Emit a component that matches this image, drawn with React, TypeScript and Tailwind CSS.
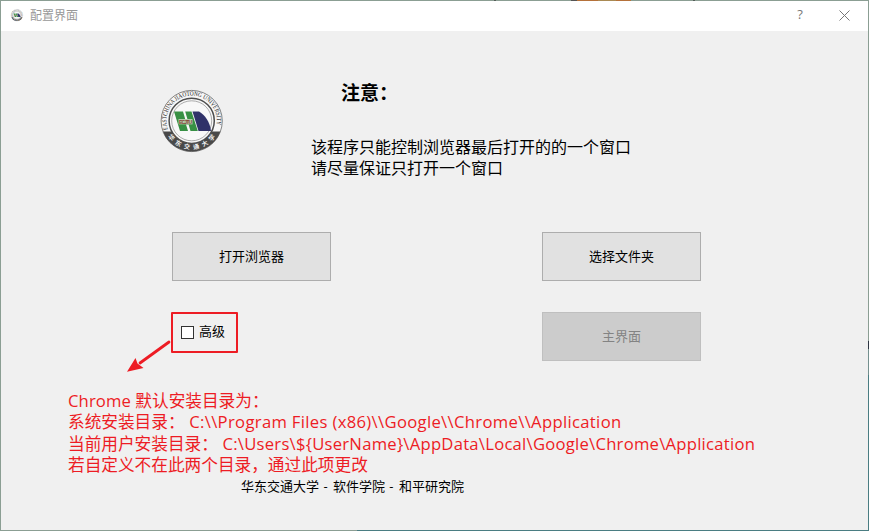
import type { ReactNode } from 'react';

const cjk = "font-['Noto_Sans_CJK_SC',sans-serif]";

function Emblem({ className }: { className: string }) {
  return (
    <svg viewBox="0 0 84 84" className={className}>
      <defs>
        <path id="topArc" d="M17.9 51.5 A25.3 25.3 0 1 1 65.5 51.5" />
        <path id="bottomArc" d="M15.5 54 A28.5 28.5 0 0 0 67.9 54" />
      </defs>
      <circle cx="41.7" cy="43" r="30.6" fill="#f6f6f6" stroke="#777" strokeWidth="0.9" />
      <path d="M13 53.5 A30.6 30.6 0 0 0 70.4 53.5 L61 53.5 A22 22 0 0 1 22.4 53.5 Z" fill="#494949" />
      <circle cx="41.7" cy="42.8" r="22.6" fill="#f8f8f8" stroke="#4d4d4d" strokeWidth="1.5" />
      <circle cx="41.7" cy="42.8" r="20" fill="none" stroke="#777" strokeWidth="0.6" />
      <text className="font-['Liberation_Serif',serif]" fontSize="6.4" fill="#222">
        <textPath href="#topArc" textLength="92" lengthAdjust="spacingAndGlyphs">EASTCHINA JIAOTONG UNIVERSITY</textPath>
      </text>
      <text className={cjk} fontSize="6.2" fontWeight="700" fill="#f4f4f4">
        <textPath href="#bottomArc" startOffset="5" textLength="56" lengthAdjust="spacing">华东交通大学</textPath>
      </text>
      <path d="M24 33.5 H33 L35.2 41 H37.4 L35.2 33.5 H41.5 L47.8 53 H40.5 L38.6 46.5 H36 L38 53 H30 Z" fill="#389044" />
      <path d="M42.5 33.5 H49 C55 37 60 44 61 53 H48.5 Z" fill="#303269" />
      <rect x="28.5" y="41" width="14" height="5.4" fill="#b3cba9" />
      <text x="29" y="45.6" className="font-['Liberation_Sans',sans-serif]" fontSize="5" fontWeight="700" fill="#86453a" textLength="13">ECJTU</text>
    </svg>
  );
}

function PushButton({ children, disabled = false }: { children: ReactNode; disabled?: boolean }) {
  return (
    <button
      disabled={disabled}
      className={`flex h-[49px] w-[159px] items-center justify-center border pb-px text-[13px] leading-5 ${
        disabled ? 'border-[#bfbfbf] bg-[#cccccc] text-[#838383]' : 'border-[#adadad] bg-[#e1e1e1] text-black'
      }`}
    >
      {children}
    </button>
  );
}

function Latin({ children, className = '' }: { children: ReactNode; className?: string }) {
  return <span className={`font-['Open_Sans',sans-serif] ${className}`}>{children}</span>;
}

export default function App() {
  return (
    <div className={`flex h-[531px] w-[869px] flex-col overflow-hidden bg-[#f0f0f0] text-black ${cjk}`}>
      <div className="flex h-px shrink-0 bg-[#8b9e93]">
        <span className="ml-[494px] w-0.5 bg-[#555d58]" />
        <span className="ml-[75px] w-1.5 bg-[#555]" />
        <span className="w-[21px] bg-[#b5713a]" />
        <span className="w-[18px] bg-[#a98a54]" />
        <span className="w-[15px] bg-[#b5713a]" />
        <span className="ml-[62px] w-0.5 bg-[#555d58]" />
      </div>

      <div className="flex min-h-0 grow">
        <div className="w-px shrink-0 bg-[#8b9e93]" />
        <div className="flex w-[867px] flex-col">
          <header className="flex h-[30px] shrink-0 items-center bg-white pb-0.5 pl-2">
            <Emblem className="size-4 rounded-full" />
            <h1 className="ml-[5px] text-[12px] leading-5 text-[#999999]">配置界面</h1>
            <span className="ml-auto w-3 text-center font-['Open_Sans',sans-serif] text-[13px] text-[#777]">?</span>
            <svg className="mr-[18px] ml-[33px] size-[11px]" viewBox="0 0 11 11" stroke="#777" strokeWidth="1">
              <path d="M.5 .5 10.5 10.5M10.5 .5 .5 10.5" />
            </svg>
          </header>

          <main className="flex min-h-0 grow flex-col">
            <section className="flex h-[201px] shrink-0 pl-[149px]">
              <Emblem className="mt-[47px] size-[84px] shrink-0" />
              <div className="ml-[77px]">
                <h2 className="mt-[47px] ml-[30px] text-[19px] leading-7 font-bold">注意：</h2>
                <p className="mt-[30px] text-[16px] leading-[21px] whitespace-nowrap">
                  该程序只能控制浏览器最后打开的的一个窗口
                  <br />
                  请尽量保证只打开一个窗口
                </p>
              </div>
            </section>

            <section className="grid h-[158px] shrink-0 grid-cols-[370px_159px] grid-rows-[80px_78px] pl-[171px]">
              <div><PushButton>打开浏览器</PushButton></div>
              <div><PushButton>选择文件夹</PushButton></div>
              <div className="relative">
                <label className="-ml-px flex h-[41px] w-[67px] items-center rounded-[1px] border-2 border-[#ed1c24] pl-2">
                  <span className="size-[13px] border border-[#333] bg-white" />
                  <span className="ml-[5px] pb-1 text-[13px] leading-5">高级</span>
                </label>
                <svg className="absolute top-[26px] -left-[46px] h-9 w-12" viewBox="0 0 48 36">
                  <path d="M43 4 14 25" stroke="#ed1c24" strokeWidth="2.8" strokeLinecap="round" />
                  <path d="M1 33.8 9.5 20 11.5 25.5 17.5 30Z" fill="#ed1c24" />
                </svg>
              </div>
              <div><PushButton disabled>主界面</PushButton></div>
            </section>

            <section className="pl-[67px] text-[16.67px] leading-[21.4px] whitespace-pre text-[#ed1c24]">
              <p><Latin className="tracking-[0.1px]">Chrome </Latin>默认安装目录为：</p>
              <p>系统安装目录：<Latin className="tracking-[0.32px]"> C:\\Program Files (x86)\\Google\\Chrome\\Application</Latin></p>
              <p>当前用户安装目录：<Latin className="tracking-[0.24px]"> {'C:\\Users\\${UserName}\\AppData\\Local\\Google\\Chrome\\Application'}</Latin></p>
              <p>若自定义不在此两个目录，通过此项更改</p>
            </section>
            <footer className="pl-[240px] text-[13px] leading-5 whitespace-pre">
              华东交通大学<Latin className="tracking-[1px]"> - </Latin>软件学院<Latin className="tracking-[1px]"> - </Latin>和平研究院
            </footer>
          </main>
        </div>
        <div className="flex w-px shrink-0 flex-col bg-[#4a7d82]">
          <span className="h-[340px] bg-[#8b9e93]" />
          <span className="h-2 bg-[#2e3542]" />
          <span className="h-[26px] bg-[#74908e]" />
        </div>
      </div>

      <div className="flex h-px shrink-0 bg-[#4a7d82]">
        <span className="w-[357px] bg-[#8b9e93]" />
      </div>
    </div>
  );
}
